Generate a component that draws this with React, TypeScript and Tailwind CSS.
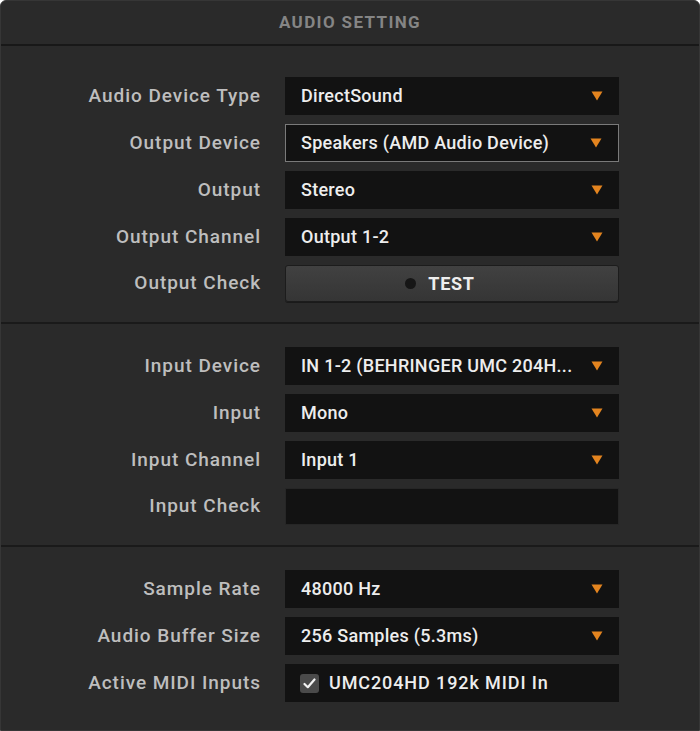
import React from "react";

type Row =
  | { label: string; kind: "select"; value: string; focused?: boolean }
  | { label: string; kind: "test" }
  | { label: string; kind: "empty" }
  | { label: string; kind: "check"; value: string };

const sections: Row[][] = [
  [
    { label: "Audio Device Type", kind: "select", value: "DirectSound" },
    { label: "Output Device", kind: "select", value: "Speakers (AMD Audio Device)", focused: true },
    { label: "Output", kind: "select", value: "Stereo" },
    { label: "Output Channel", kind: "select", value: "Output 1-2" },
    { label: "Output Check", kind: "test" },
  ],
  [
    { label: "Input Device", kind: "select", value: "IN 1-2 (BEHRINGER UMC 204H..." },
    { label: "Input", kind: "select", value: "Mono" },
    { label: "Input Channel", kind: "select", value: "Input 1" },
    { label: "Input Check", kind: "empty" },
  ],
  [
    { label: "Sample Rate", kind: "select", value: "48000 Hz" },
    { label: "Audio Buffer Size", kind: "select", value: "256 Samples (5.3ms)" },
    { label: "Active MIDI Inputs", kind: "check", value: "UMC204HD 192k MIDI In" },
  ],
];

function Arrow() {
  return (
    <svg width="12" height="10" viewBox="0 0 12 10" className="shrink-0">
      <polygon points="0.5,0.5 11.5,0.5 6,9.5" fill="#e3841f" />
    </svg>
  );
}

function Control({ row }: { row: Row }) {
  if (row.kind === "select") {
    return (
      <div
        className={
          "flex h-[38px] w-[334px] items-center justify-between bg-[#121212] pl-4 pr-4 " +
          (row.focused ? "border border-[#7a7a7a] pl-[15px]" : "")
        }
      >
        <span className="-mt-[2px] whitespace-nowrap pr-2 text-[18px] font-medium tracking-[0.015em] text-[#ededed]">
          {row.value}
        </span>
        <Arrow />
      </div>
    );
  }
  if (row.kind === "test") {
    return (
      <button className="flex h-[37px] w-[334px] items-center justify-center gap-[12px] rounded-[3px] border border-[#1c1c1c] bg-gradient-to-b from-[#414141] to-[#353535] pr-[24px] shadow-[0_1px_0_#1a1a1a]">
        <span className="h-[11px] w-[11px] rounded-full bg-[#161616]" />
        <span className="text-[18px] font-bold tracking-[0.04em] text-[#eeeeee]">TEST</span>
      </button>
    );
  }
  if (row.kind === "empty") {
    return <div className="h-[37px] w-[334px] border border-[#262626] bg-[#121212]" />;
  }
  return (
    <div className="flex h-[38px] w-[334px] items-center gap-[10px] bg-[#121212] pl-[15px]">
      <span className="flex h-[19px] w-[19px] items-center justify-center rounded-[3px] bg-[#4a4a4a]">
        <svg width="13" height="11" viewBox="0 0 13 11">
          <path d="M1.5 6 L4.8 9.2 L11.5 1.5" stroke="#f2f2f2" strokeWidth="2.2" fill="none" strokeLinecap="round" strokeLinejoin="round" />
        </svg>
      </span>
      <span className="-mt-[2px] whitespace-nowrap text-[18px] font-medium tracking-[0.05em] text-[#ededed]">{row.value}</span>
    </div>
  );
}

export default function App() {
  return (
    <div
      className="h-[731px] w-[700px] overflow-hidden rounded-t-[6px] border border-[#363636] bg-[#2a2a2a]"
      style={{ fontFamily: "Roboto, 'Liberation Sans', sans-serif" }}
    >
      <header className="flex h-[45px] items-center justify-center border-b-2 border-[#181818]">
        <h1 className="text-[17px] font-bold tracking-[0.08em] text-[#858585]">AUDIO SETTING</h1>
      </header>

      {sections.map((rows, i) => (
        <section
          key={i}
          className={
            "flex flex-col gap-[9px] " +
            (i === 0 ? "pb-[20px] pt-[31px] " : i === 1 ? "pb-[20px] pt-[23px] " : "pb-[21px] pt-[23px] ") +
            (i < sections.length - 1 ? "border-b-2 border-[#1a1a1a]" : "")
          }
        >
          {rows.map((row) => (
            <div key={row.label} className="flex items-center">
              <div className="w-[260px] whitespace-nowrap text-right text-[19px] font-medium tracking-[0.05em] text-[#bebebe]">
                {row.label}
              </div>
              <div className="ml-[24px]">
                <Control row={row} />
              </div>
            </div>
          ))}
        </section>
      ))}
    </div>
  );
}
